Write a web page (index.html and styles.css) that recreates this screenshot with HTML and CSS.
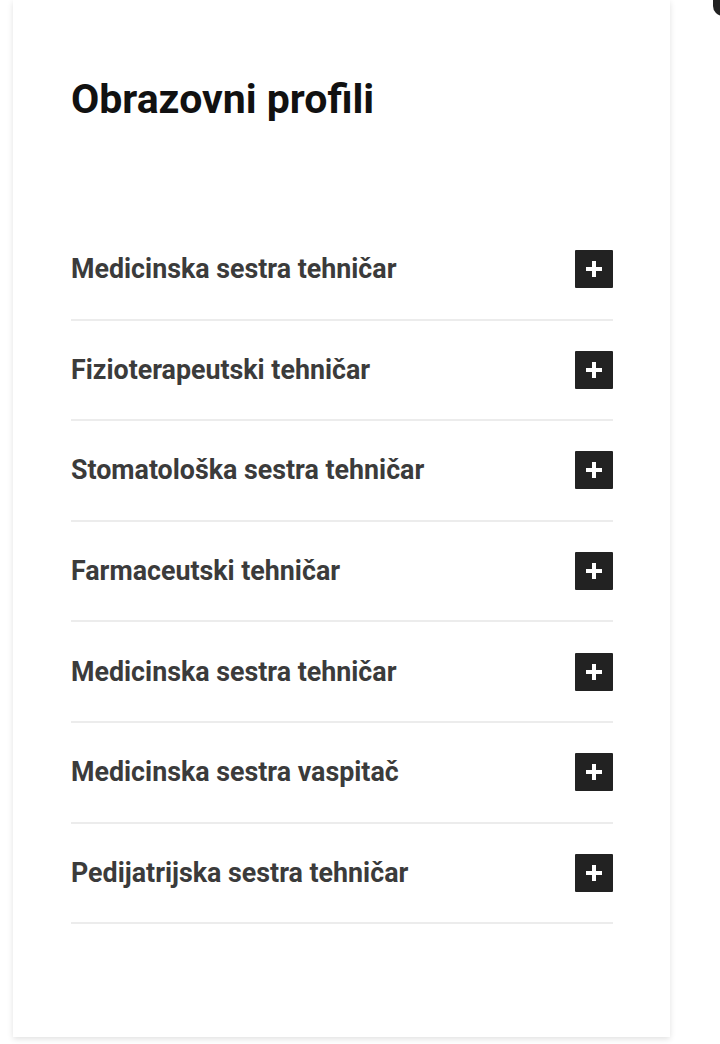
FILE: index.html
```html
<!DOCTYPE html>
<html lang="sr">
<head>
  <meta charset="UTF-8" />
  <meta name="viewport" content="width=device-width, initial-scale=1.0" />
  <title>Obrazovni profili</title>
  <link rel="stylesheet" href="styles.css">
</head>
<body>
  <div class="page">
    <div class="card">
      <h2 class="title">Obrazovni profili</h2>
      <ul class="profiles">
        <li class="profile"><span>Medicinska sestra tehničar</span><button class="toggle" aria-label="Otvori"></button></li>
        <li class="profile"><span>Fizioterapeutski tehničar</span><button class="toggle" aria-label="Otvori"></button></li>
        <li class="profile"><span>Stomatološka sestra tehničar</span><button class="toggle" aria-label="Otvori"></button></li>
        <li class="profile"><span>Farmaceutski tehničar</span><button class="toggle" aria-label="Otvori"></button></li>
        <li class="profile"><span>Medicinska sestra tehničar</span><button class="toggle" aria-label="Otvori"></button></li>
        <li class="profile"><span>Medicinska sestra vaspitač</span><button class="toggle" aria-label="Otvori"></button></li>
        <li class="profile"><span>Pedijatrijska sestra tehničar</span><button class="toggle" aria-label="Otvori"></button></li>
      </ul>
    </div>
    <div class="corner-btn"></div>
  </div>
</body>
</html>
```

FILE: styles.css
```css
* { margin:0; padding:0; box-sizing:border-box; }
body {
  font-family:Roboto, "Liberation Sans", Arial, sans-serif;
  background:#fff;
  height:1044px; overflow:hidden;
}
.page { position:relative; padding-left:13px; }
.card {
  width:657px; background:#fff;
  padding:74px 57px 113px 58px;
  box-shadow:0 2px 6px rgba(0,0,0,0.12);
}
.title {
  font-size:41px; font-weight:700; color:#111;
  line-height:50px;
  margin-bottom:96px;
}
.profiles { list-style:none; }
.profile {
  height:100.6px;
  display:flex; align-items:center; justify-content:space-between;
  border-bottom:2px solid #ececec;
  font-size:26.8px; font-weight:700; color:#3b3b3b;
}
.toggle {
  position:relative;
  width:38px; height:38px;
  border:none; border-radius:1px;
  background:#222;
}
.toggle::before, .toggle::after {
  content:""; position:absolute;
  left:50%; top:50%;
  background:#fff;
  transform:translate(-50%,-50%);
}
.toggle::before { width:16px; height:4px; }
.toggle::after { width:4px; height:16px; }
.corner-btn {
  position:absolute; top:0; left:713px;
  width:40px; height:16px;
  background:#222; border-radius:0 0 0 10px;
}
```
